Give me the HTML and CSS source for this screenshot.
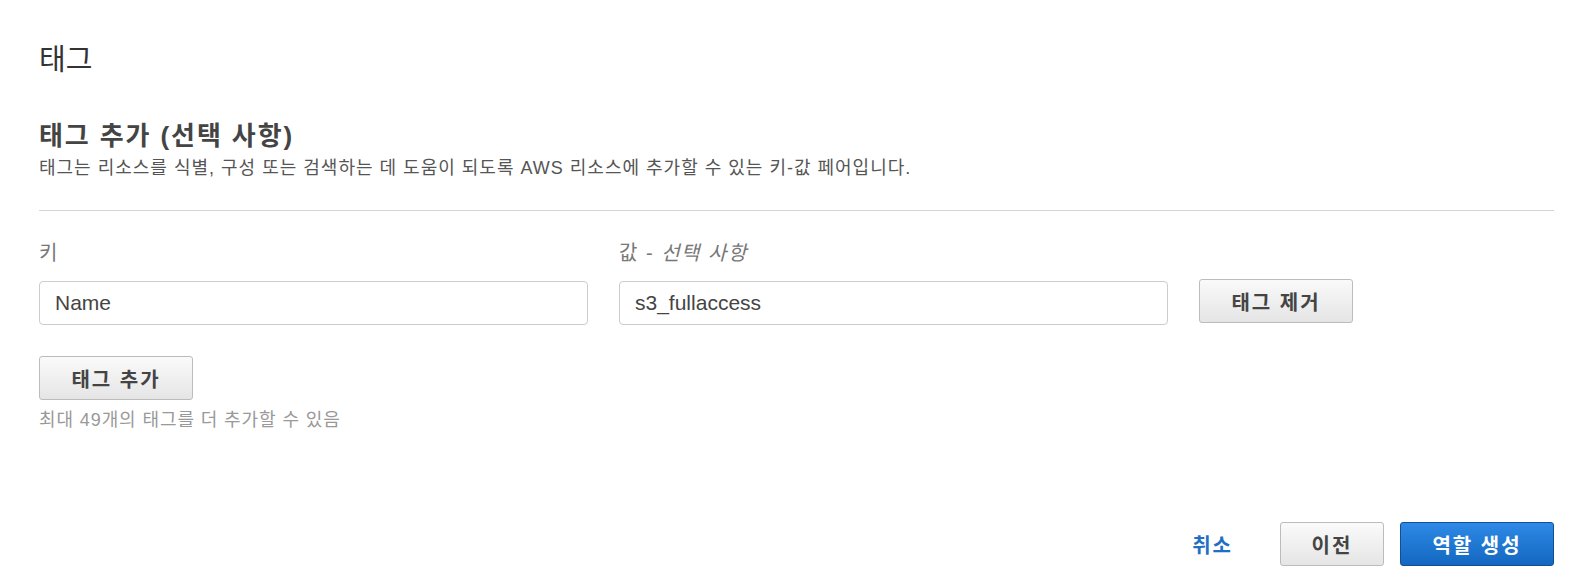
FILE: index.html
```html
<!DOCTYPE html>
<html lang="ko">
<head>
    <meta charset="UTF-8">
    <title>태그</title>
    <link rel="stylesheet" href="styles.css">
</head>
<body>
    <div class="page">
        <h1 class="page-title">태그</h1>

        <div class="section-head">
            <h2>태그 추가 (선택 사항)</h2>
            <p>태그는 리소스를 식별, 구성 또는 검색하는 데 도움이 되도록 AWS 리소스에 추가할 수 있는 키-값 페어입니다.</p>
        </div>

        <hr class="divider">

        <div class="tag-row">
            <div class="field">
                <label class="field-label">키</label>
                <input class="text-input" type="text" value="Name">
            </div>
            <div class="field">
                <label class="field-label">값 - <em>선택 사항</em></label>
                <input class="text-input" type="text" value="s3_fullaccess">
            </div>
            <button class="btn btn-remove">태그 제거</button>
        </div>

        <button class="btn btn-add">태그 추가</button>
        <p class="hint">최대 49개의 태그를 더 추가할 수 있음</p>

        <div class="footer">
            <a class="cancel" href="#">취소</a>
            <button class="btn btn-prev">이전</button>
            <button class="btn btn-primary">역할 생성</button>
        </div>
    </div>
</body>
</html>
```

FILE: styles.css
```css
body {
    margin: 0;
    background: #fff;
    font-family: "Liberation Sans", Arial, "Noto Sans CJK KR", sans-serif;
    color: #444;
}
.page {
    padding: 43px 23px 0 39px;
}
.page-title {
    margin: 0;
    font-size: 29px;
    line-height: 34px;
    font-weight: normal;
    color: #333;
}
.section-head {
    margin-top: 44px;
}
.section-head h2 {
    margin: 0;
    font-size: 26px;
    line-height: 30px;
    letter-spacing: 1.9px;
    font-weight: bold;
    color: #444;
}
.section-head p {
    margin: 6px 0 0 0;
    font-size: 18px;
    line-height: 22px;
    letter-spacing: 1px;
    color: #555;
}
.divider {
    border: none;
    border-top: 1px solid #d5d5d5;
    margin: 31px 0 0 0;
}
.tag-row {
    display: flex;
    align-items: flex-end;
    gap: 31px;
    margin-top: 30px;
}
.field {
    display: flex;
    flex-direction: column;
    width: 549px;
}
.field-label {
    font-size: 20px;
    line-height: 24px;
    letter-spacing: 1.5px;
    color: #777;
    margin-bottom: 16px;
}
.field-label em {
    font-style: italic;
}
.text-input {
    box-sizing: border-box;
    height: 44px;
    padding: 0 15px;
    border: 1px solid #ccc;
    border-radius: 4px;
    font-family: inherit;
    font-size: 21px;
    color: #444;
    outline: none;
}
.btn {
    box-sizing: border-box;
    height: 44px;
    width: 154px;
    border: 1px solid #bcbcbc;
    border-radius: 3px;
    background: linear-gradient(#fafafa, #e5e5e5);
    font-family: inherit;
    font-size: 20px;
    letter-spacing: 2px;
    font-weight: bold;
    color: #444;
    cursor: pointer;
}
.btn-remove {
    margin-bottom: 2px;
}
.btn-add {
    display: block;
    margin-top: 31px;
}
.hint {
    margin: 9px 0 0 0;
    font-size: 18px;
    line-height: 22px;
    letter-spacing: 0.9px;
    color: #999;
}
.footer {
    display: flex;
    justify-content: flex-end;
    align-items: center;
    gap: 16px;
    margin-top: 91px;
}
.cancel {
    font-size: 20px;
    letter-spacing: 2px;
    font-weight: bold;
    color: #1f6fc5;
    text-decoration: none;
    margin-right: 31px;
}
.btn-prev {
    width: 104px;
}
.btn-primary {
    border-color: #0e4f95;
    background: linear-gradient(#2d8ae6, #1467c0);
    color: #fff;
}
```
